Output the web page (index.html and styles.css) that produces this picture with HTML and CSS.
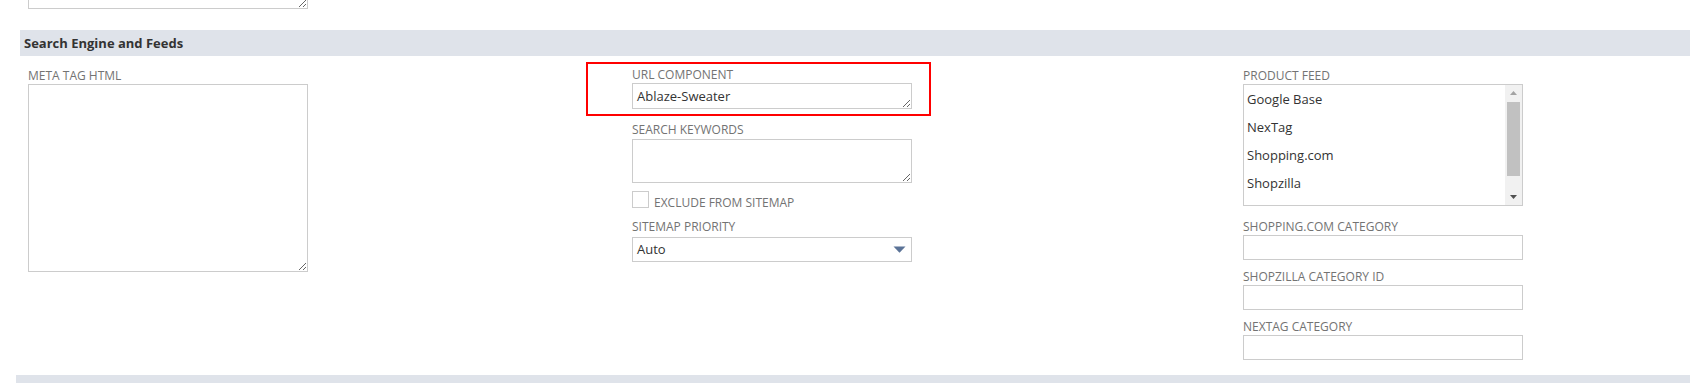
FILE: index.html
```html
<!DOCTYPE html>
<html lang="en">
<head>
  <meta charset="UTF-8" />
  <title>Search Engine and Feeds</title>
  <link rel="stylesheet" href="styles.css">
</head>
<body>

  <!-- tail of the previous section -->
  <div class="prev-field">
    <textarea class="text-area"></textarea>
  </div>

  <div class="section-head">Search Engine and Feeds</div>

  <div class="section-body">
    <!-- column 1 -->
    <div class="col">
      <div class="field">
        <label class="field-label">Meta Tag HTML</label>
        <textarea class="text-area meta"></textarea>
      </div>
    </div>

    <!-- column 2 -->
    <div class="col col-mid">
      <div class="highlight">
        <div class="field">
          <label class="field-label">URL Component</label>
          <textarea class="text-area single">Ablaze-Sweater</textarea>
        </div>
      </div>
      <div class="field gap-13">
        <label class="field-label">Search Keywords</label>
        <textarea class="text-area keywords"></textarea>
      </div>
      <div class="check-row">
        <input type="checkbox" class="check">
        <span class="check-label">Exclude from Sitemap</span>
      </div>
      <div class="field gap-11">
        <label class="field-label">Sitemap Priority</label>
        <div class="select-wrap">
          <div class="select">Auto</div>
          <svg class="select-arrow" width="13" height="7" viewBox="0 0 13 7"><path d="M0.5 0.5 H12.5 L6.5 6.8 Z" fill="#5b7397"/></svg>
        </div>
      </div>
    </div>

    <!-- column 3 -->
    <div class="col">
      <div class="field">
        <label class="field-label">Product Feed</label>
        <div class="listbox">
          <div class="options">
            <div class="option">Google Base</div>
            <div class="option">NexTag</div>
            <div class="option">Shopping.com</div>
            <div class="option">Shopzilla</div>
          </div>
          <div class="scrollbar">
            <div class="sb-btn"><svg width="7" height="4" viewBox="0 0 7 4"><path d="M0 4 L3.5 0 L7 4 Z" fill="#a3a3a3"/></svg></div>
            <div class="sb-thumb"></div>
            <div class="sb-space"></div>
            <div class="sb-btn"><svg width="7" height="4" viewBox="0 0 7 4"><path d="M0 0 H7 L3.5 4 Z" fill="#505050"/></svg></div>
          </div>
        </div>
      </div>
      <div class="field gap-13">
        <label class="field-label">Shopping.com Category</label>
        <input class="text-input">
      </div>
      <div class="field gap-9">
        <label class="field-label">Shopzilla Category ID</label>
        <input class="text-input">
      </div>
      <div class="field gap-9">
        <label class="field-label">NexTag Category</label>
        <input class="text-input">
      </div>
    </div>
  </div>

  <div class="section-head next"></div>

</body>
</html>
```

FILE: styles.css
```css
* { box-sizing: border-box; }
html, body { overflow: hidden; }
body {
  margin: 0;
  font-family: 'Open Sans', sans-serif;
  background: #fff;
  color: #333;
}

.prev-field {
  height: 9px;
  overflow: hidden;
  display: flex;
  align-items: flex-end;
  padding-left: 28px;
}
.prev-field .text-area {
  width: 280px;
  height: 60px;
  flex-shrink: 0;
}

.section-head {
  margin: 21px 0 0 20px;
  height: 26px;
  line-height: 26px;
  padding-left: 4px;
  background: #dfe3ea;
  color: #333;
  font-weight: bold;
  font-size: 13px;
}
.section-head.next {
  margin: 0 0 0 16px;
  height: 8px;
}

.section-body {
  display: grid;
  grid-template-columns: 604px 611px 280px;
  padding: 12px 0 15px 28px;
  align-items: start;
}

.col { display: flex; flex-direction: column; align-items: flex-start; }
.col-mid { margin-top: -1px; }

.field-label {
  display: block;
  font-size: 12px;
  line-height: 16px;
  text-transform: uppercase;
  color: #737373;
}

.gap-13 { margin-top: 13px; }
.gap-11 { margin-top: 11px; }
.gap-9 { margin-top: 9px; }

.text-area {
  display: block;
  width: 280px;
  border: 1px solid #ccc;
  border-radius: 0;
  font-family: 'Open Sans', sans-serif;
  font-size: 13px;
  line-height: 16px;
  padding: 4px;
  color: #333;
  overflow: hidden;
  outline: none;
  margin: 0;
}
.text-area.meta { height: 188px; }
.text-area.single { height: 26px; }
.text-area.keywords { height: 44px; margin-top: 1px; }

.highlight {
  border: 2px solid #ff0000;
  margin: -5px -19px -7px -46px;
  padding: 3px 17px 5px 44px;
}

.check-row {
  display: flex;
  align-items: flex-start;
  margin-top: 8px;
  height: 17px;
}
.check {
  -webkit-appearance: none;
  appearance: none;
  width: 17px;
  height: 17px;
  margin: 0;
  border: 1px solid #ccc;
  background: #fff;
}
.check-label {
  margin: 5px 0 0 5px;
  font-size: 12px;
  line-height: 14px;
  text-transform: uppercase;
  color: #737373;
}

.select-wrap {
  position: relative;
  width: 280px;
  margin-top: 2px;
}
.select {
  height: 25px;
  border: 1px solid #ccc;
  padding: 0 4px;
  font-size: 13px;
  line-height: 23px;
  color: #333;
}
.select-arrow {
  position: absolute;
  right: 6px;
  top: 9px;
}

.listbox {
  display: flex;
  width: 280px;
  height: 122px;
  border: 1px solid #ccc;
}
.options { flex: 1; }
.option {
  height: 28px;
  line-height: 28px;
  padding-left: 3px;
  font-size: 13px;
  color: #333;
}
.scrollbar {
  width: 17px;
  background: #f1f1f1;
  display: flex;
  flex-direction: column;
}
.sb-btn {
  height: 16px;
  display: flex;
  align-items: center;
  justify-content: center;
}
.sb-thumb {
  height: 74px;
  margin: 1px 2px 0;
  background: #c1c1c1;
}
.sb-space { flex: 1; }

.text-input {
  display: block;
  width: 280px;
  height: 25px;
  border: 1px solid #ccc;
  padding: 0 4px;
  margin: 0;
  font-family: 'Open Sans', sans-serif;
  font-size: 13px;
  outline: none;
}
```
